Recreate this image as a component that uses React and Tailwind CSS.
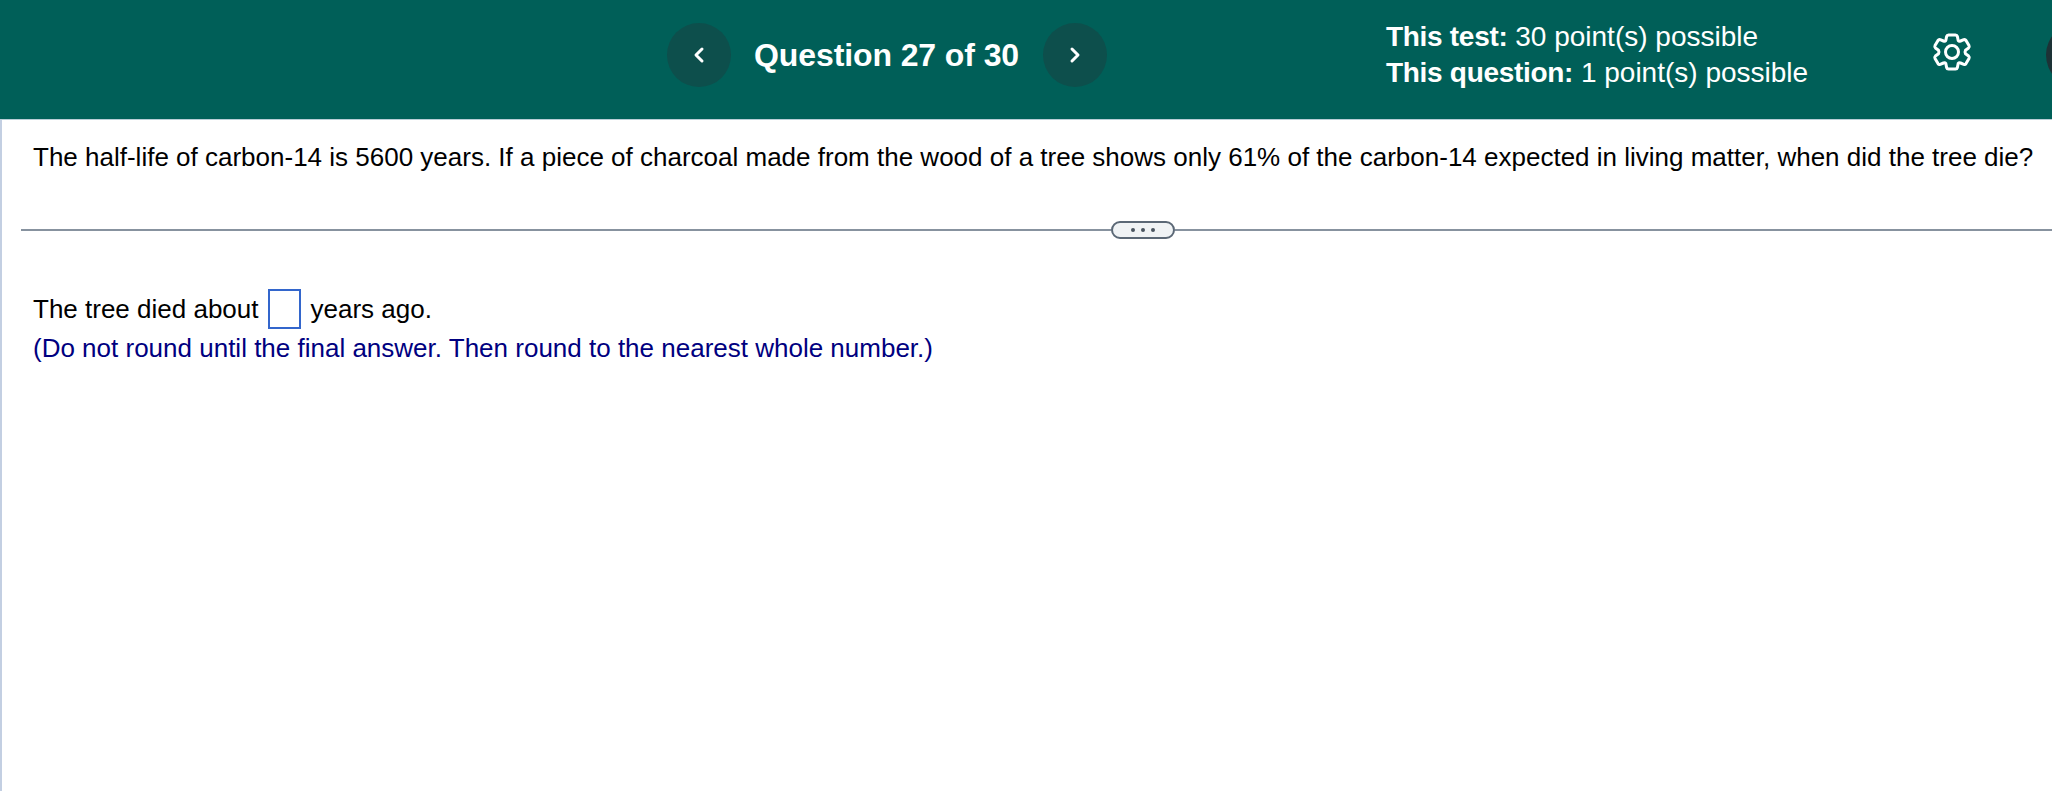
import React from 'react';
import { ChevronLeft, ChevronRight } from 'lucide-react';

function NavButton({ children }) {
  return (
    <button className="w-[64px] h-[64px] rounded-full bg-[#0d4f4c] flex items-center justify-center text-white">
      {children}
    </button>
  );
}

// six-lobed cog, taller than wide
function Cog() {
  return (
    <svg className="w-[36px] h-[38px] -mt-[16px] overflow-visible" viewBox="0 0 36 38" fill="none" stroke="currentColor" strokeWidth="3" strokeLinejoin="round">
      <path d="M14.5 2H21.5Q23 2 23.4 3.5L24.2 7.5Q25 8.5 26.5 8L29.8 6.6Q31.2 6.2 32 7.4L35 12.6Q35.7 14 34.6 15L31.5 17.3Q30.6 19 31.5 20.7L34.6 23Q35.7 24 35 25.4L32 30.6Q31.2 31.8 29.8 31.4L26.5 30Q25 29.5 24.2 30.5L23.4 34.5Q23 36 21.5 36H14.5Q13 36 12.6 34.5L11.8 30.5Q11 29.5 9.5 30L6.2 31.4Q4.8 31.8 4 30.6L1 25.4Q.3 24 1.4 23L4.5 20.7Q5.4 19 4.5 17.3L1.4 15Q.3 14 1 12.6L4 7.4Q4.8 6.2 6.2 6.6L9.5 8Q11 8.5 11.8 7.5L12.6 3.5Q13 2 14.5 2Z" />
      <circle cx="18" cy="19" r="6.5" />
    </svg>
  );
}

function App() {
  return (
    <div className="w-[2052px] h-[791px] overflow-hidden bg-white text-black font-['Liberation_Sans',Arial,sans-serif]">
      {/* Header */}
      <header className="h-[120px] bg-[#005f58] border-b border-[#b9cdd6] flex items-center text-white relative overflow-hidden">
        <div className="ml-[667px] flex items-center -mt-[9px]">
          <NavButton><ChevronLeft size={24} strokeWidth={3} /></NavButton>
          <h1 className="ml-[23px] w-[289px] text-[32px] leading-[40px] font-bold tracking-[-0.1px]">Question 27 of 30</h1>
          <NavButton><ChevronRight size={24} strokeWidth={3} /></NavButton>
        </div>
        <div className="ml-[279px] text-[28px] leading-[36px] -mt-[9px] w-[548px] whitespace-nowrap">
          <div><span className="font-bold tracking-[-0.3px]">This test:</span> 30 point(s) possible</div>
          <div><span className="font-bold tracking-[-0.3px]">This question:</span> 1 point(s) possible</div>
        </div>
        <Cog />
        <div className="absolute left-[2046px] top-[23px] w-[64px] h-[64px] rounded-full bg-[#1d3236]" />
      </header>

      {/* Body */}
      <main className="h-[671px] border-l-2 border-[#c3cfe2] pl-[31px] pt-[23px] overflow-hidden">
        <p className="text-[26px] leading-[28px] whitespace-nowrap">
          The half-life of carbon-14 is 5600 years. If a piece of charcoal made from the wood of a tree shows only 61% of the carbon-14 expected in living matter, when did the tree die?
        </p>

        <div className="-ml-[12px] mt-[50px] flex items-center h-[18px]">
          <div className="w-[1090px] h-[2px] bg-[#87929f]" />
          <div className="w-[64px] h-[18px] rounded-full border-2 border-[#5b6876] bg-[#f0f3f5] flex items-center justify-center gap-[6px]">
            <span className="w-[4px] h-[4px] rounded-full bg-[#4a5560]" />
            <span className="w-[4px] h-[4px] rounded-full bg-[#4a5560]" />
            <span className="w-[4px] h-[4px] rounded-full bg-[#4a5560]" />
          </div>
          <div className="flex-1 h-[2px] bg-[#87929f]" />
        </div>

        <div className="mt-[50px] flex items-center text-[26px] leading-[40px] whitespace-nowrap">
          <span>The tree died about</span>
          <span className="ml-[9px] w-[33px] h-[40px] border-2 border-[#3366cc]" />
          <span className="ml-[10px]">years ago.</span>
        </div>
        <p className="text-[26px] leading-[38px] text-[#000080] whitespace-nowrap">
          (Do not round until the final answer. Then round to the nearest whole number.)
        </p>
      </main>
    </div>
  );
}

export default App;
